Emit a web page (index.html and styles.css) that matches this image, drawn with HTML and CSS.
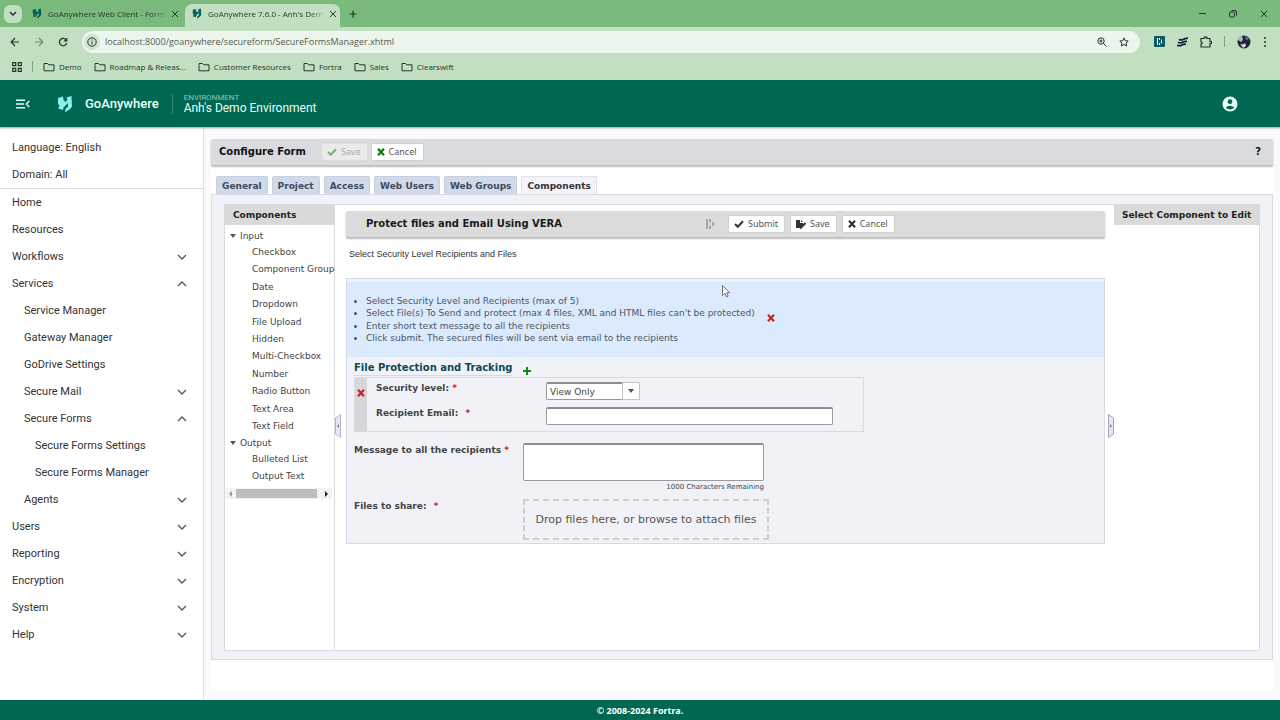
FILE: index.html
```html
<!DOCTYPE html>
<html lang="en">
<head>
<meta charset="utf-8">
<meta name="viewport" content="width=device-width, initial-scale=1">
<title>GoAnywhere 7.6.0 - Anh's Demo Environment</title>
<link rel="stylesheet" href="styles.css">
</head>
<body>
<svg class="defs" aria-hidden="true">
  <symbol id="ga" viewBox="0 0 16 18"><path d="M1 3 6 1.500 6.500 5 8.500 7 10.500 5 9.500 2.500 14.500 1 15 11.500 13 14 8 17.500 8.500 14 11 11.500 11 8 6.500 12.500 6 15 1 13.500 2.500 11 1 8.500z"/></symbol>
  <symbol id="folder" viewBox="0 0 12 10"><path d="M1 1.500h3.500l1.200 1.300H11v6H1z" fill="none" stroke="currentColor"/></symbol>
  <symbol id="down" viewBox="0 0 10 6"><path d="m1 1 4 4 4-4" fill="none" stroke="currentColor" stroke-width="1.300"/></symbol>
  <symbol id="up" viewBox="0 0 10 6"><path d="m1 5 4-4 4 4" fill="none" stroke="currentColor" stroke-width="1.300"/></symbol>
  <symbol id="x" viewBox="0 0 8 8"><path d="m1 .8 6 6.400M7 .8 1 7.200" fill="none" stroke="currentColor" stroke-width="2.200"/></symbol>
  <symbol id="thinx" viewBox="0 0 8 8"><path d="m1 1 6 6M7 1 1 7" fill="none" stroke="currentColor"/></symbol>
  <symbol id="check" viewBox="0 0 10 8"><path d="m1 4 2.800 2.800L9 1.300" fill="none" stroke="currentColor" stroke-width="2"/></symbol>
</svg>

<header class="browser">
  <div class="tabstrip">
    <button class="tab-search" aria-label="Search tabs"><svg width="8" height="5" viewBox="0 0 8 5"><path d="m1 1 3 3 3-3" fill="none" stroke="currentColor" stroke-width="1.500"/></svg></button>
    <div class="btab"><svg class="logo-dark" width="10" height="11"><use href="#ga"/></svg><span class="btab-title">GoAnywhere Web Client - Form</span><button aria-label="Close tab"><svg width="8" height="8"><use href="#thinx"/></svg></button></div>
    <div class="btab btab-active"><svg class="logo-dark" width="10" height="11"><use href="#ga"/></svg><span class="btab-title">GoAnywhere 7.6.0 - Anh's Dem</span><button aria-label="Close tab"><svg width="8" height="8"><use href="#thinx"/></svg></button></div>
    <button class="newtab" aria-label="New tab"><svg width="8" height="8" viewBox="0 0 8 8"><path d="M4 .5v7M.5 4h7" stroke="currentColor" stroke-width="1.200"/></svg></button>
    <div class="win">
      <button aria-label="Minimize"><svg width="7" height="7" viewBox="0 0 7 7"><path d="M0 3.500h7" stroke="currentColor"/></svg></button>
      <button aria-label="Restore"><svg width="8" height="8" viewBox="0 0 8 8" fill="none" stroke="currentColor"><rect x=".5" y="2" width="5" height="5" rx="1"/><path d="M2.500.5H6q1.500 0 1.500 1.500v3.500"/></svg></button>
      <button aria-label="Close"><svg width="8" height="8"><use href="#thinx"/></svg></button>
    </div>
  </div>
  <div class="toolbar">
    <button aria-label="Back"><svg width="10" height="10" viewBox="0 0 10 10"><path d="M9 5H1.500M5 1 1.200 5 5 9" fill="none" stroke="currentColor" stroke-width="1.200"/></svg></button>
    <button class="dim" aria-label="Forward"><svg width="10" height="10" viewBox="0 0 10 10"><path d="M1 5h7.500M5 1l3.800 4L5 9" fill="none" stroke="currentColor" stroke-width="1.200"/></svg></button>
    <button aria-label="Reload"><svg width="10" height="10" viewBox="0 0 10 10"><path d="M8.300 3.200A3.700 3.700 0 1 0 8.700 6" fill="none" stroke="currentColor" stroke-width="1.300"/><path d="M9.300.5v4h-4z" fill="currentColor"/></svg></button>
    <div class="omnibox">
      <button class="site" aria-label="Site information"><svg width="10" height="10" viewBox="0 0 10 10"><circle cx="5" cy="5" r="4.200" fill="none" stroke="currentColor"/><path d="M5 4.500V7.300M5 2.500v1.100" stroke="currentColor"/></svg></button>
      <input class="url" aria-label="Address" value="localhost:8000/goanywhere/secureform/SecureFormsManager.xhtml">
      <button aria-label="Zoom"><svg width="10" height="10" viewBox="0 0 10 10" fill="none" stroke="currentColor"><circle cx="4" cy="4" r="3.200"/><path d="m6.300 6.300 3.200 3.200M2.300 4h3.400M4 2.300v3.400"/></svg></button>
      <button aria-label="Bookmark"><svg width="10" height="10" viewBox="0 0 10 10" fill="none" stroke="currentColor"><path d="m5 .9 1.200 2.800 3 .3L7 6l.7 3L5 7.500 2.300 9 3 6 .8 4l3-.3z"/></svg></button>
    </div>
    <div class="extensions">
      <button aria-label="Vera extension"><svg width="11" height="11" viewBox="0 0 11 11"><rect width="11" height="11" rx="1" fill="#0d5966"/><path d="M3.500 2v7M5.500 2v2M5.500 7v2M7.500 3.500v4" stroke="#fff"/></svg></button>
      <button aria-label="Fortra extension"><svg width="11" height="10" viewBox="0 0 11 10"><path d="M2 2.200Q4 3.500 6 2.500T11 1.200M1 5.200Q3.500 6.300 5.500 5.300T10 4.500M0 8.300q3 .8 5-.4T9 7.500" fill="none" stroke="#15203e" stroke-width="1.700"/></svg></button>
      <button aria-label="Extensions"><svg width="12" height="12" viewBox="0 0 12 12"><path d="M1 2.500h3.200V1.200h2.600v1.300H10v3h1.400v2H10V11H1V8.200L2.300 7 1 5.600z" fill="none" stroke="currentColor" stroke-width="1.200"/></svg></button>
      <span class="rule"></span>
      <button aria-label="Profile"><svg width="14" height="14" viewBox="0 0 14 14"><circle cx="7" cy="7" r="6.500" fill="#242635"/><path d="M1 5q1-3.500 4-4.200L6 5 4 7z" fill="#a6bad0"/><path d="m8 1 4 3-3 1z" fill="#6f83ad"/><path d="M3 8.500q3 2 5-.5l1 3-3 2z" fill="#e5d8dc"/></svg></button>
      <button aria-label="Menu"><svg width="4" height="12" viewBox="0 0 4 12" fill="currentColor"><circle cx="2" cy="2" r="1"/><circle cx="2" cy="6" r="1"/><circle cx="2" cy="10" r="1"/></svg></button>
    </div>
  </div>
  <nav class="bookmarks" aria-label="Bookmarks">
    <button class="apps" aria-label="Apps"><svg width="10" height="10" viewBox="0 0 10 10" fill="none" stroke="currentColor" stroke-width="1.200"><path d="M.7.7h3v3h-3zM6.300.7h3v3h-3zM.7 6.300h3v3h-3zM6.300 6.300h3v3h-3z"/></svg></button>
    <span class="rule"></span>
    <a href="#"><svg width="12" height="10"><use href="#folder"/></svg>Demo</a>
    <a href="#"><svg width="12" height="10"><use href="#folder"/></svg>Roadmap &amp; Releas...</a>
    <a href="#"><svg width="12" height="10"><use href="#folder"/></svg>Customer Resources</a>
    <a href="#"><svg width="12" height="10"><use href="#folder"/></svg>Fortra</a>
    <a href="#"><svg width="12" height="10"><use href="#folder"/></svg>Sales</a>
    <a href="#"><svg width="12" height="10"><use href="#folder"/></svg>Clearswift</a>
  </nav>
</header>

<div class="appbar">
  <button class="menu-toggle" aria-label="Collapse menu"><svg width="14" height="10" viewBox="0 0 14 10" fill="none" stroke="currentColor" stroke-width="1.400"><path d="M0 1.200h9M0 5h8M0 8.800h9M13.300 2 10.300 5l3 3"/></svg></button>
  <svg class="logo-light" width="16" height="18"><use href="#ga"/></svg>
  <span class="brand">GoAnywhere</span>
  <div class="env"><span class="env-label">ENVIRONMENT</span><span class="env-name">Anh's Demo Environment</span></div>
  <button class="account" aria-label="Account"><svg width="16" height="16" viewBox="0 0 16 16"><circle cx="8" cy="8" r="7.500" fill="#e9fffa"/><circle cx="8" cy="5.700" r="2.400" fill="#056954"/><path d="M3.700 11.500Q5.300 9.700 8 9.700t4.300 1.800Q10.700 13.600 8 13.600t-4.300-2.100z" fill="#056954"/></svg></button>
</div>

<div class="workspace">
  <nav class="sidebar" aria-label="Main">
    <div class="context"><a href="#">Language: English</a><a href="#">Domain: All</a></div>
    <a href="#">Home</a>
    <a href="#">Resources</a>
    <a href="#">Workflows<svg width="10" height="6"><use href="#down"/></svg></a>
    <a href="#">Services<svg width="10" height="6"><use href="#up"/></svg></a>
    <div class="sub">
      <a href="#">Service Manager</a>
      <a href="#">Gateway Manager</a>
      <a href="#">GoDrive Settings</a>
      <a href="#">Secure Mail<svg width="10" height="6"><use href="#down"/></svg></a>
      <a href="#">Secure Forms<svg width="10" height="6"><use href="#up"/></svg></a>
      <div class="subsub"><a href="#">Secure Forms Settings</a><a href="#">Secure Forms Manager</a></div>
      <a href="#">Agents<svg width="10" height="6"><use href="#down"/></svg></a>
    </div>
    <a href="#">Users<svg width="10" height="6"><use href="#down"/></svg></a>
    <a href="#">Reporting<svg width="10" height="6"><use href="#down"/></svg></a>
    <a href="#">Encryption<svg width="10" height="6"><use href="#down"/></svg></a>
    <a href="#">System<svg width="10" height="6"><use href="#down"/></svg></a>
    <a href="#">Help<svg width="10" height="6"><use href="#down"/></svg></a>
  </nav>

  <main class="content">
    <div class="page">
      <div class="page-bar">
        <h1>Configure Form</h1>
        <button class="btn" disabled><svg class="green" width="10" height="8"><use href="#check"/></svg>Save</button>
        <button class="btn"><svg class="green" width="8" height="8"><use href="#x"/></svg>Cancel</button>
        <button class="help" aria-label="Help">?</button>
      </div>
      <div class="tabs" role="tablist">
        <button role="tab">General</button><button role="tab">Project</button><button role="tab">Access</button><button role="tab">Web Users</button><button role="tab">Web Groups</button><button role="tab" class="active" aria-selected="true">Components</button>
      </div>
      <div class="panel">
        <div class="panes">
          <section class="tree">
            <h2>Components</h2>
            <div class="group"><i class="caret"></i>Input</div>
            <ul class="inputs"><li>Checkbox</li><li>Component Group</li><li>Date</li><li>Dropdown</li><li>File Upload</li><li>Hidden</li><li>Multi-Checkbox</li><li>Number</li><li>Radio Button</li><li>Text Area</li><li>Text Field</li></ul>
            <div class="group"><i class="caret"></i>Output</div>
            <ul class="outputs"><li>Bulleted List</li><li>Output Text</li></ul>
            <div class="hscroll"><i class="left"></i><span></span><i class="right"></i></div>
          </section>
          <div class="splitter"><svg width="6" height="24" viewBox="0 0 6 24"><path d="M5.500.5v23L.5 20V4z" fill="#e7e7f4" stroke="#b3b3ce"/><path d="M4 10v4l-2-2z" fill="#77778f"/></svg></div>
          <section class="form">
            <div class="form-bar">
              <h2>Protect files and Email Using VERA</h2>
              <svg class="vera" width="10" height="10" viewBox="0 0 10 10" stroke="#999" stroke-width="1.600"><path d="M2 0v10M5 0v3M5 7v3M8 3v4"/><path d="M5 4v2" stroke="#ccc"/></svg>
              <button class="btn"><svg width="10" height="8"><use href="#check"/></svg>Submit</button>
              <button class="btn"><svg width="10" height="9" viewBox="0 0 10 9"><path d="M0 0h4v3h3v2L5 8H0z" fill="currentColor"/><path d="M5 0v2h2z" fill="currentColor"/><path d="M4 8.500 9.500 3" stroke="currentColor" stroke-width="2"/></svg>Save</button>
              <button class="btn"><svg width="8" height="8"><use href="#x"/></svg>Cancel</button>
            </div>
            <p class="intro">Select Security Level Recipients and Files</p>
            <form class="fields">
              <div class="notice">
                <ul><li>Select Security Level and Recipients (max of 5)</li><li>Select File(s) To Send and protect (max 4 files, XML and HTML files can't be protected)</li><li>Enter short text message to all the recipients</li><li>Click submit. The secured files will be sent via email to the recipients</li></ul>
                <button class="remove" type="button" aria-label="Remove notice"><svg width="8" height="8"><use href="#x"/></svg></button>
                <svg class="pointer" width="8" height="13" viewBox="0 0 8 13"><path d="M.5.5v10L3 8.300l1.500 3.600 1.700-.7-1.500-3.500h2.800z" fill="#fff" stroke="#555" stroke-width=".8"/></svg>
              </div>
              <div class="section-title"><h3>File Protection and Tracking</h3><button type="button" aria-label="Add"><svg width="8" height="8" viewBox="0 0 8 8"><path d="M4 0v8M0 4h8" stroke="#128a12" stroke-width="2"/></svg></button></div>
              <div class="group-box">
                <button class="remove" type="button" aria-label="Remove group"><svg width="8" height="8"><use href="#x"/></svg></button>
                <div class="group-fields">
                  <div class="row"><label for="level">Security level: <b>*</b></label><div class="select"><select id="level"><option>View Only</option></select><span><i class="caret"></i></span></div></div>
                  <div class="row"><label for="email">Recipient Email: <b class="gap">*</b></label><input id="email" type="text"></div>
                </div>
              </div>
              <div class="field message"><label for="msg">Message to all the recipients <b>*</b></label><div class="stack"><textarea id="msg"></textarea><small>1000 Characters Remaining</small></div></div>
              <div class="field"><label for="drop">Files to share: <b class="gap">*</b></label><button id="drop" type="button" class="drop">Drop files here, or browse to attach files</button></div>
            </form>
          </section>
          <div class="splitter end"><svg width="6" height="24" viewBox="0 0 6 24"><path d="M.5.5v23l5-3.500V4z" fill="#e7e7f4" stroke="#a3a3ba"/><path d="M2 10v4l2-2z" fill="#77778f"/></svg></div>
          <section class="editor"><h2>Select Component to Edit</h2></section>
        </div>
      </div>
    </div>
  </main>
</div>
<footer class="footer">© 2008-2024 Fortra.</footer>
</body>
</html>
```
FILE: styles.css
```css
* { box-sizing: border-box; }
body {
  margin: 0;
  min-height: 100vh;
  display: flex;
  flex-direction: column;
  font: 9px/12px "DejaVu Sans", Verdana, sans-serif;
  color: #444;
  background: #fff;
}
button, input, textarea, select { font: inherit; color: inherit; }
button { border: 0; padding: 0; background: none; display: flex; align-items: center; justify-content: center; }
a { color: inherit; text-decoration: none; }
h1, h2, h3, p, ul { margin: 0; padding: 0; }
svg { flex: none; display: block; }
.defs { position: absolute; width: 0; height: 0; }
.logo-dark { fill: #08645c; }
.logo-light { fill: #86f1ee; }

/* Browser window */
.browser { background: #c2dfc1; color: #26352a; font: 8px/12px "Open Sans", "Noto Sans", sans-serif; }
.tabstrip { height: 27px; display: flex; align-items: center; background: #7aba7d; padding-left: 4px; }
.tab-search { width: 18px; height: 18px; border-radius: 6px; background: #c2dfc1; margin-right: 3px; }
.btab { width: 158px; height: 23px; align-self: flex-end; display: flex; align-items: center; gap: 6px; padding: 0 8px 4px 7px; border-radius: 7px 7px 0 0; }
.btab-active { background: #c2dfc1; width: 155px; margin-left: 2px; }
.btab-title { flex: 1; white-space: nowrap; mask-image: linear-gradient(to right, #000 88%, rgba(0, 0, 0, .2)); }
.newtab { margin-left: 9px; }
.win { margin-left: auto; display: flex; gap: 23px; padding-right: 12px; }
.toolbar { height: 29px; display: flex; align-items: center; padding: 0 13px 0 10px; gap: 14px; }
.dim { opacity: .5; }
.omnibox { flex: 1; height: 22px; border-radius: 11px; background: #edf6ec; display: flex; align-items: center; gap: 12px; padding: 0 11px 0 2px; }
.site { width: 16px; height: 16px; border-radius: 8px; background: #cfe3cf; }
.url { flex: 1; min-width: 0; border: 0; padding: 0; margin-left: -7px; background: none; color: #505c53; font-size: 9px; }
.extensions { display: flex; align-items: center; gap: 12px; }
.rule { width: 1px; height: 11px; background: #75a879; }
.bookmarks { height: 24px; display: flex; align-items: center; gap: 12px; padding: 0 12px 3px; }
.bookmarks a { display: flex; align-items: center; gap: 4px; }
.bookmarks .rule { margin: 0 -2px 0 -2px; }

/* Application header */
.appbar { height: 47px; display: flex; align-items: center; padding: 0 42px 0 16px; background: #006852; color: #e9fffa; font-family: Roboto, sans-serif; box-shadow: 0 1px 2px #8aa; position: relative; }
.logo-light { margin: 0 12px 0 27px; }
.brand { font-size: 13px; font-weight: 500; padding-right: 13px; line-height: 20px; border-right: 1px solid #34826f; }
.env { display: flex; flex-direction: column; margin-left: 11px; }
.env-label { font-size: 8px; line-height: 9px; color: #8fc5b9; }
.env-name { font-size: 12px; line-height: 13px; }
.account { margin-left: auto; }

/* Navigation */
.workspace { flex: 1; display: flex; }
.sidebar { width: 204px; padding-top: 7px; border-right: 1px solid #dcdcdf; font: 11px/27px Roboto, sans-serif; }
.sidebar a { display: flex; align-items: center; justify-content: space-between; padding: 0 16px 0 12px; color: #333; }
.sidebar svg { color: #555; }
.context { border-bottom: 1px solid #dcdcdf; }
.sidebar .sub a { padding-left: 24px; }
.sidebar .subsub a { padding-left: 35px; }

/* Page */
.content { flex: 1; min-width: 0; background: #fafafd; padding: 12px 7px 10px; display: flex; }
.page { flex: 1; min-width: 0; display: flex; flex-direction: column; background: #fff; padding-bottom: 30px; }
.page-bar, .form-bar { display: flex; align-items: center; height: 27px; border-bottom: 1px solid #bebebe; box-shadow: 0 1px 2px #bbb; border-radius: 2px; }
.page-bar { gap: 3px; padding: 0 12px 0 8px; background: #dadbdf; }
h1 { font-size: 10px; color: #111; margin-right: 12px; }
.btn { height: 18px; gap: 4px; padding: 0 6px 0 5px; background: #fff; border: 1px solid #d0d0d0; border-radius: 2px; color: #555; font-family: "Noto Sans", sans-serif; }
.btn svg { color: #333; }
.btn .green { color: #087a0c; }
.btn:disabled { background: #eaeaea; border-color: #ddd; color: #aaa; }
.btn:disabled .green { opacity: .5; }
.help { margin-left: auto; font-size: 10px; font-weight: bold; color: #111; }
.tabs { display: flex; gap: 4px; padding: 10px 5px 0; }
.tabs button { height: 18px; padding: 0 5px; background: #d0daea; border: 1px solid #c9cfdd; border-bottom: 0; border-radius: 2px 2px 0 0; font-weight: bold; color: #3d4a5c; }
.tabs .active { background: #f3f3f9; border-color: #e0e0ea; color: #333; }
.panel { flex: 1; display: flex; padding: 9px 12px 8px; background: #f1f2f8; border: 1px solid #d9dbe3; }
.panes { flex: 1; min-width: 0; display: flex; background: #fff; border: 1px solid #d9dbe3; }
.tree h2, .editor h2 { height: 20px; font-size: 9px; line-height: 20px; color: #222; background: #dadada; padding: 0 8px; white-space: nowrap; }
.tree { width: 110px; border-right: 1px solid #d9dbe3; color: #444; }
.group { display: flex; align-items: center; gap: 4px; padding-left: 5px; height: 15px; }
.tree h2 + .group { margin-top: 3px; }
.caret { width: 0; height: 0; border: 3px solid transparent; border-top: 4px solid #555; border-bottom: 0; }
.tree ul { list-style: none; display: flex; flex-direction: column; padding-left: 27px; white-space: nowrap; }
.tree li { flex: 1; display: flex; align-items: center; }
.inputs { height: 192px; }
.outputs { height: 35px; }
.hscroll { display: flex; align-items: center; gap: 4px; height: 11px; margin: 3px 2px 0 0; padding: 0 4px; background: #f3f3f3; }
.hscroll span { flex: 1; height: 9px; background: #bdbdbd; margin-right: 4px; }
.left { border: 3px solid transparent; border-left: 0; border-right-color: #999; }
.right { border: 3px solid transparent; border-right: 0; border-left-color: #222; }
.splitter { width: 11px; display: flex; align-items: center; padding-bottom: 3px; }
.splitter.end { width: 9px; justify-content: flex-end; }
.editor { width: 145px; }

/* Form */
.form { flex: 1; min-width: 0; padding-top: 6px; }
.form-bar { gap: 5px; padding-left: 20px; background: #dcdcdc; }
.form-bar h2 { font-size: 10px; color: #1b1b1b; width: 333px; }
.vera { margin: 0 8px 0 1px; }
.intro { padding: 10px 3px 18px; font: 9px/12px "Liberation Sans", Arial, sans-serif; color: #333; }
.fields { background: #f1f2f8; border: 1px solid #d9dbe3; padding-bottom: 3px; }
.notice { position: relative; display: flex; align-items: center; gap: 12px; height: 75px; margin-top: 3px; padding: 0 7px; background: #dceafd; color: #4a5568; }
.notice ul { height: 50px; display: flex; flex-direction: column; justify-content: space-between; padding-left: 12px; }
.notice .remove { margin-bottom: 4px; }
.remove { color: #c1272d; }
.pointer { position: absolute; left: 375px; top: 3px; }
.section-title { display: flex; align-items: center; gap: 11px; padding: 3px 7px 1px; }
h3 { font-size: 10px; line-height: 15px; color: #0e4957; border-bottom: 1px solid #d0dce5; }
.section-title button { margin-top: 5px; }
.group-box { display: flex; width: 510px; height: 55px; margin-left: 7px; border: 1px solid #d9dbe3; }
.group-box .remove { width: 12px; background: #d7d7da; padding-bottom: 23px; }
.group-fields { flex: 1; padding: 4px 9px; }
.row { display: flex; height: 25px; }
.row label { width: 170px; line-height: 12px; }
label { font-weight: bold; color: #444; }
label b { color: #c1272d; }
.gap { margin-left: 4px; }
input[type="text"], textarea, select { appearance: none; background: #fff; border: 1px solid #999; border-top: 2px solid #8d8d92; border-radius: 2px; padding: 0 3px; }
#email { width: 287px; height: 18px; }
.select { position: relative; width: 94px; height: 18px; }
.select select { display: block; width: 100%; height: 18px; }
.select span { position: absolute; inset: 0 0 0 auto; width: 18px; display: flex; align-items: center; justify-content: center; background: #fff; border: 1px solid #c4c4cb; border-radius: 0 2px 2px 0; pointer-events: none; }
.field { display: flex; padding: 0 7px; }
.field label { width: 169px; padding-top: 1px; }
.message { padding-top: 11px; height: 67px; }
.stack { display: flex; flex-direction: column; }
textarea { display: block; width: 241px; height: 38px; resize: none; }
.stack small { font-size: 7px; line-height: 12px; text-align: right; }
.drop { width: 246px; height: 41px; border: 2px dashed #cdced4; font-size: 11px; color: #555; white-space: nowrap; }

.footer { height: 20px; display: flex; align-items: center; justify-content: center; padding-top: 2px; background: #006852; color: #fff; font: bold 9px/12px "Noto Sans", sans-serif; }
```
